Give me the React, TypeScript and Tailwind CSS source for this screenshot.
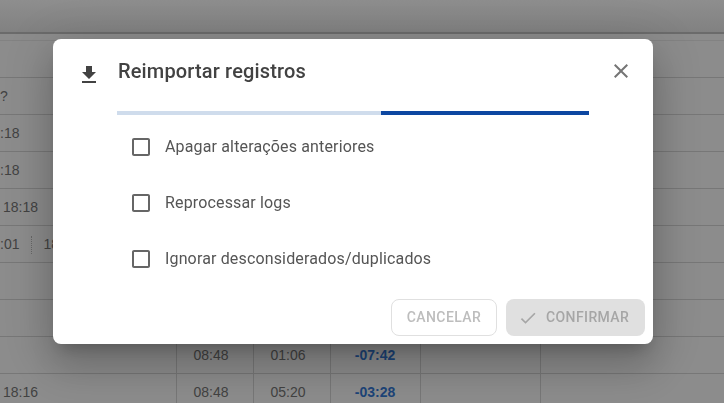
const rows = [
  { first: '' },
  { first: '?' },
  { first: ':18' },
  { first: ':18' },
  { first: '18:18' },
  { first: ':01', second: '18:18' },
  { first: '' },
  { first: '' },
  { first: '', a: '08:48', b: '01:06', c: '-07:42' },
  { first: '18:16', a: '08:48', b: '05:20', c: '-03:28' },
];

const options = ['Apagar alterações anteriores', 'Reprocessar logs', 'Ignorar desconsiderados/duplicados'];

function Row({ first, second, a, b, c }: { first: string; second?: string; a?: string; b?: string; c?: string }) {
  const noIndent = first.startsWith(':') || first === '?';
  return (
    <div className="grid h-[37px] grid-cols-[177px_77px_77px_90px_120px_1fr] items-stretch border-b border-[#777] text-[14px] leading-[36px] text-[#424242]">
      <div className={noIndent ? 'overflow-hidden whitespace-nowrap border-r border-[#777] pl-0' : 'overflow-hidden whitespace-nowrap border-r border-[#777] pl-[3px]'}>
        {first}
        {second && (
          <>
            <span className="ml-[12px] inline-block h-[18px] border-l border-dotted border-[#666] align-middle" />
            <span className="ml-[11px]">{second}</span>
          </>
        )}
      </div>
      <div className="border-r border-[#777] pr-[8px] text-center">{a}</div>
      <div className="border-r border-[#777] pr-[8px] text-center">{b}</div>
      <div className="border-r border-[#777] pr-[1px] text-center font-bold text-[#1c4478]">{c}</div>
      <div className="border-r border-[#777]" />
      <div />
    </div>
  );
}

export default function App() {
  return (
    <div className="relative h-[403px] w-[724px] overflow-hidden bg-[#8c8c8c] font-['Liberation_Sans',sans-serif]">
      <div className="h-[34px] border-b-2 border-[#6b6b6b] bg-[linear-gradient(#8e8e8e,#818181)]" />
      <div className="h-[7px] border-b border-[#828282]" />
      {rows.map((r, i) => (
        <Row key={i} {...r} />
      ))}

      {/* modal */}
      <div className="absolute left-[53px] top-[39px] flex h-[305px] w-[600px] flex-col rounded-[8px] bg-white font-['Roboto',sans-serif] antialiased [will-change:transform] shadow-[0_11px_15px_-7px_rgba(0,0,0,0.2),0_24px_38px_3px_rgba(0,0,0,0.14),0_9px_46px_8px_rgba(0,0,0,0.12)]">
        <div className="flex items-start pl-[24px] pr-[20px] pt-[20px]">
          <svg viewBox="0 0 24 24" className="mt-[4px] h-6 w-6 fill-[#424242]">
            <path d="M19 9h-4V3H9v6H5l7 7 7-7zM5 18v2h14v-2H5z" />
          </svg>
          <h2 className="ml-[17px] text-[20px] font-medium leading-[24px] tracking-[0.15px] text-[#424242]">Reimportar registros</h2>
          <svg viewBox="0 0 24 24" className="ml-auto h-6 w-6 fill-[#757575]">
            <path d="M19 6.41 17.59 5 12 10.59 6.41 5 5 6.41 10.59 12 5 17.59 6.41 19 12 13.41 17.59 19 19 17.59 13.41 12z" />
          </svg>
        </div>

        <div className="ml-[64px] mt-[24px] flex h-[4px] w-[472px]">
          <div className="w-[264px] bg-[#cfdcec]" />
          <div className="flex-1 bg-[#0d47a1]" />
        </div>

        <div className="ml-[76px] mt-[4px] flex flex-col">
          {options.map((o) => (
            <label key={o} className="flex h-[56px] items-center">
              <svg viewBox="0 0 24 24" className="h-6 w-6 fill-[#666]">
                <path d="M19 5v14H5V5h14m0-2H5c-1.1 0-2 .9-2 2v14c0 1.1.9 2 2 2h14c1.1 0 2-.9 2-2V5c0-1.1-.9-2-2-2z" />
              </svg>
              <span className="ml-[12px] text-[16px] leading-[24px] tracking-[0.15px] text-[#555]">{o}</span>
            </label>
          ))}
        </div>

        <div className="mt-auto flex justify-end gap-[9px] pb-[8px] pr-[8px]">
          <button className="h-[37px] w-[106px] rounded-[8px] border border-[#e0e0e0] text-[14px] font-medium tracking-[0.4px] text-[#bdbdbd]">
            CANCELAR
          </button>
          <button className="flex h-[37px] w-[139px] items-center rounded-[8px] bg-[#e0e0e0] pl-[12px] text-[14px] font-medium tracking-[0.4px] text-[#a6a6a6]">
            <svg viewBox="0 0 24 24" className="h-[20px] w-[20px] fill-[#a6a6a6]">
              <path d="M9 16.17 4.83 12l-1.42 1.41L9 19 21 7l-1.41-1.41z" />
            </svg>
            <span className="ml-[8px]">CONFIRMAR</span>
          </button>
        </div>
      </div>
    </div>
  );
}
